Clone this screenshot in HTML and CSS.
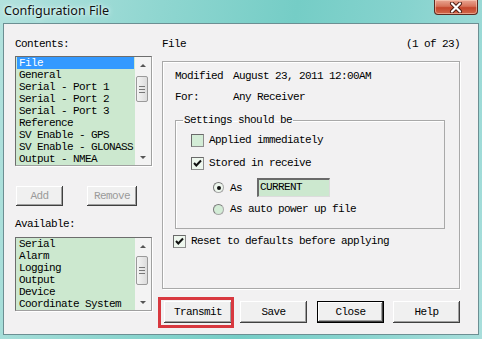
FILE: index.html
```html
<!DOCTYPE html>
<html lang="en">
<head>
  <meta charset="UTF-8">
  <title>Configuration File</title>
  <link rel="stylesheet" href="styles.css">
</head>
<body>

<div class="window">
  <div class="titlebar">
    <span class="title">Configuration File</span>
    <div class="close-btn">
      <svg width="14" height="11" viewBox="0 0 14 11">
        <path d="M3 1.5 L11 9.5 M11 1.5 L3 9.5" stroke="#4a1a10" stroke-width="4" stroke-linecap="round"/>
        <path d="M3 1.5 L11 9.5 M11 1.5 L3 9.5" stroke="#fff" stroke-width="2.2" stroke-linecap="round"/>
      </svg>
    </div>
  </div>

  <div class="client">
    <div class="left">
      <div class="label">Contents:</div>
      <div class="listbox contents">
        <ul class="items">
          <li class="selected">File</li>
          <li>General</li>
          <li>Serial - Port 1</li>
          <li>Serial - Port 2</li>
          <li>Serial - Port 3</li>
          <li>Reference</li>
          <li>SV Enable - GPS</li>
          <li>SV Enable - GLONASS</li>
          <li>Output - NMEA</li>
        </ul>
        <div class="scrollbar">
          <div class="arrow up"></div>
          <div class="thumb top"><span></span><span></span><span></span></div>
          <div class="arrow down"></div>
        </div>
      </div>

      <div class="add-row">
        <button class="btn disabled add">Add</button>
        <button class="btn disabled remove">Remove</button>
      </div>

      <div class="label avail-label">Available:</div>
      <div class="listbox available">
        <ul class="items">
          <li>Serial</li>
          <li>Alarm</li>
          <li>Logging</li>
          <li>Output</li>
          <li>Device</li>
          <li>Coordinate System</li>
        </ul>
        <div class="scrollbar">
          <div class="arrow up"></div>
          <div class="thumb mid"><span></span><span></span><span></span></div>
          <div class="arrow down"></div>
        </div>
      </div>
    </div>

    <div class="right">
      <div class="header">
        <span>File</span>
        <span>(1 of 23)</span>
      </div>

      <div class="groupbox">
        <div class="info"><span class="key">Modified</span>August 23, 2011 12:00AM</div>
        <div class="info for"><span class="key">For:</span>Any Receiver</div>

        <fieldset class="settings">
          <legend>Settings should be</legend>
          <div class="row r1"><span class="check"></span>Applied immediately</div>
          <div class="row r2"><span class="check checked"></span>Stored in receive</div>
          <div class="row r3 sub">
            <span class="radio on"></span><span class="as">As</span>
            <span class="textbox">CURRENT</span>
          </div>
          <div class="row r4 sub"><span class="radio"></span>As auto power up file</div>
        </fieldset>

        <div class="row reset"><span class="check checked"></span>Reset to defaults before applying</div>
      </div>

      <div class="buttons">
        <button class="btn w-transmit">Transmit</button>
        <button class="btn w-save">Save</button>
        <button class="btn default w-close">Close</button>
        <button class="btn w-help">Help</button>
        <div class="highlight"></div>
      </div>
    </div>
  </div>
</div>

</body>
</html>
```

FILE: styles.css
```css
body {
  margin: 0;
  width: 482px;
  height: 339px;
  overflow: hidden;
  font-family: "Liberation Mono", "DejaVu Sans Mono", monospace;
  font-size: 11px;
  letter-spacing: -0.6px;
  color: #000;
}

.window {
  width: 482px;
  height: 339px;
  box-sizing: border-box;
  padding: 0 3px 4px 3px;
  background: linear-gradient(100deg, #b3e2de 0%, #8fd6d0 30%, #75cdc6 55%, #86d3ce 75%, #a8dedb 100%);
}

.titlebar {
  height: 23px;
  position: relative;
  display: flex;
  align-items: center;
}

.title {
  font-family: "Noto Sans", "Open Sans", sans-serif;
  font-size: 12.6px;
  letter-spacing: 0;
  padding-left: 1px;
  margin-top: -3px;
  color: #111;
  text-shadow: 0 0 6px #e8fbfa, 0 0 3px #e8fbfa;
}

.close-btn {
  position: absolute;
  right: 1px;
  top: 0;
  width: 44px;
  height: 15px;
  box-sizing: border-box;
  border: 1px solid #5d2a20;
  border-top: none;
  border-radius: 0 0 4px 4px;
  background: linear-gradient(#e9a592 0%, #d7735a 45%, #c4462c 55%, #d2684a 100%);
  box-shadow: inset 0 0 0 1px rgba(255, 220, 200, 0.5);
  display: flex;
  align-items: center;
  justify-content: center;
}

.client {
  height: 312px;
  box-sizing: border-box;
  border: 1px solid #6c8f93;
  background: #f2f1f2;
  display: flex;
  padding: 14px 0 0 11px;
}

.left {
  width: 137px;
}

.label {
  height: 12px;
  line-height: 12px;
}

.listbox {
  margin-top: 6px;
  box-sizing: border-box;
  border: 1px solid #a0a0a0;
  border-top-color: #6d6d6d;
  border-left-color: #6d6d6d;
  background: #cce8cf;
  display: flex;
  box-shadow: 1px 1px 0 #fff;
}

.contents {
  height: 110px;
}

.available {
  margin-top: 7px;
  height: 74px;
}

.items {
  flex: 1;
  list-style: none;
  margin: 0;
  padding: 0 1px;
  overflow: hidden;
}

.items li {
  height: 12px;
  line-height: 12px;
  padding-left: 2px;
  white-space: nowrap;
}

.items li.selected {
  background: #3399ff;
  color: #fff;
}

.scrollbar {
  width: 16px;
  background: #f3f3f3;
  display: flex;
  flex-direction: column;
  position: relative;
}

.arrow {
  height: 16px;
  display: flex;
  align-items: center;
  justify-content: center;
}

.arrow::after {
  content: "";
  border-left: 3px solid transparent;
  border-right: 3px solid transparent;
}

.arrow.up::after {
  border-bottom: 3px solid #555;
}

.arrow.down {
  margin-top: auto;
}

.arrow.down::after {
  border-top: 3px solid #555;
}

.thumb {
  position: absolute;
  left: 1px;
  width: 12px;
  box-sizing: border-box;
  border: 1px solid #9a9a9a;
  border-radius: 2px;
  background: linear-gradient(90deg, #f4f4f4, #dcdcdc);
  display: flex;
  flex-direction: column;
  align-items: center;
  justify-content: center;
  gap: 2px;
}

.thumb span {
  width: 6px;
  height: 1px;
  background: #777;
}

.thumb.top {
  top: 19px;
  height: 26px;
}

.thumb.mid {
  top: 18px;
  height: 29px;
}

.add-row {
  margin-top: 20px;
  display: flex;
  gap: 24px;
  padding-left: 1px;
}

.btn {
  font-family: inherit;
  font-size: 11px;
  letter-spacing: -0.6px;
  height: 22px;
  padding: 0;
  border: none;
  background: #f0f0f0;
  color: #000;
  box-shadow: inset -1px -1px 0 #404040, inset 1px 1px 0 #fff, inset -2px -2px 0 #a0a0a0, inset 2px 2px 0 #f0f0f0;
}

.btn.disabled {
  color: #9a9a9a;
  height: 20px;
}

.add {
  width: 47px;
}

.remove {
  width: 50px;
}

.avail-label {
  margin-top: 12px;
}

.right {
  margin-left: 10px;
  width: 298px;
}

.header {
  height: 12px;
  line-height: 12px;
  display: flex;
  justify-content: space-between;
}

.groupbox {
  margin-top: 11px;
  height: 228px;
  box-sizing: border-box;
  border: 1px solid #a9a9a9;
  box-shadow: inset 1px 1px 0 #fff, 1px 1px 0 #fff;
  padding: 8px 0 0 12px;
}

.info {
  height: 12px;
  line-height: 12px;
  display: flex;
}

.info.for {
  margin-top: 9px;
}

.key {
  width: 58px;
}

.settings {
  margin: 11px 0 0 0;
  width: 270px;
  height: 115px;
  box-sizing: border-box;
  border: 1px solid #a9a9a9;
  box-shadow: inset 1px 1px 0 #fff;
  padding: 0 0 0 15px;
}

.settings legend {
  padding: 0 1px;
  margin-left: -8px;
  line-height: 12px;
}

.row {
  display: flex;
  align-items: center;
  height: 12px;
}

.r1 {
  margin-top: 8px;
}

.r2 {
  margin-top: 11px;
}

.r3 {
  margin-top: 9px;
  height: 19px;
}

.r4 {
  margin-top: 6px;
}

.sub {
  padding-left: 22px;
}

.check {
  width: 13px;
  height: 13px;
  box-sizing: border-box;
  border: 1px solid #8d8d8d;
  border-top-color: #6a6a6a;
  border-left-color: #6a6a6a;
  background: #d3ecd6;
  margin-right: 5px;
  flex: none;
}

.check.checked {
  background: #eef7ee url("data:image/svg+xml;utf8,<svg xmlns='http://www.w3.org/2000/svg' width='11' height='11'><path d='M2 5 L4.3 7.5 L9 2.5' fill='none' stroke='%23111' stroke-width='2'/></svg>") center no-repeat;
}

.reset {
  margin-top: 6px;
  margin-left: -2px;
}

.radio {
  width: 11px;
  height: 11px;
  box-sizing: border-box;
  border-radius: 50%;
  border: 1px solid #a8a8a8;
  border-top-color: #7a7a7a;
  border-left-color: #7a7a7a;
  background: #d3ecd6;
  margin-right: 6px;
  display: flex;
  align-items: center;
  justify-content: center;
  flex: none;
}

.radio.on {
  background: #eef7ee;
}

.radio.on::after {
  content: "";
  width: 4px;
  height: 4px;
  border-radius: 50%;
  background: #111;
}

.as {
  width: 27px;
}

.textbox {
  width: 73px;
  height: 19px;
  box-sizing: border-box;
  border: 1px solid #dcdcdc;
  border-top: 2px solid #6a6a6a;
  border-left: 2px solid #6a6a6a;
  background: #cce8cf;
  line-height: 15px;
  padding-left: 1px;
}

.buttons {
  margin-top: 12px;
  padding-left: 2px;
  display: flex;
  gap: 9px;
  position: relative;
}

.w-transmit {
  width: 68px;
  margin-right: -1px;
}

.w-save,
.w-close,
.w-help {
  width: 67px;
}

.w-close {
  margin-left: 1px;
}

.btn.default {
  box-shadow: inset 0 0 0 1px #000, inset -2px -2px 0 #404040, inset 2px 2px 0 #fff, inset -3px -3px 0 #a0a0a0;
}

.highlight {
  position: absolute;
  left: -4px;
  top: -4px;
  width: 76px;
  height: 31px;
  box-sizing: border-box;
  border: 3px solid #d8383f;
}
```
